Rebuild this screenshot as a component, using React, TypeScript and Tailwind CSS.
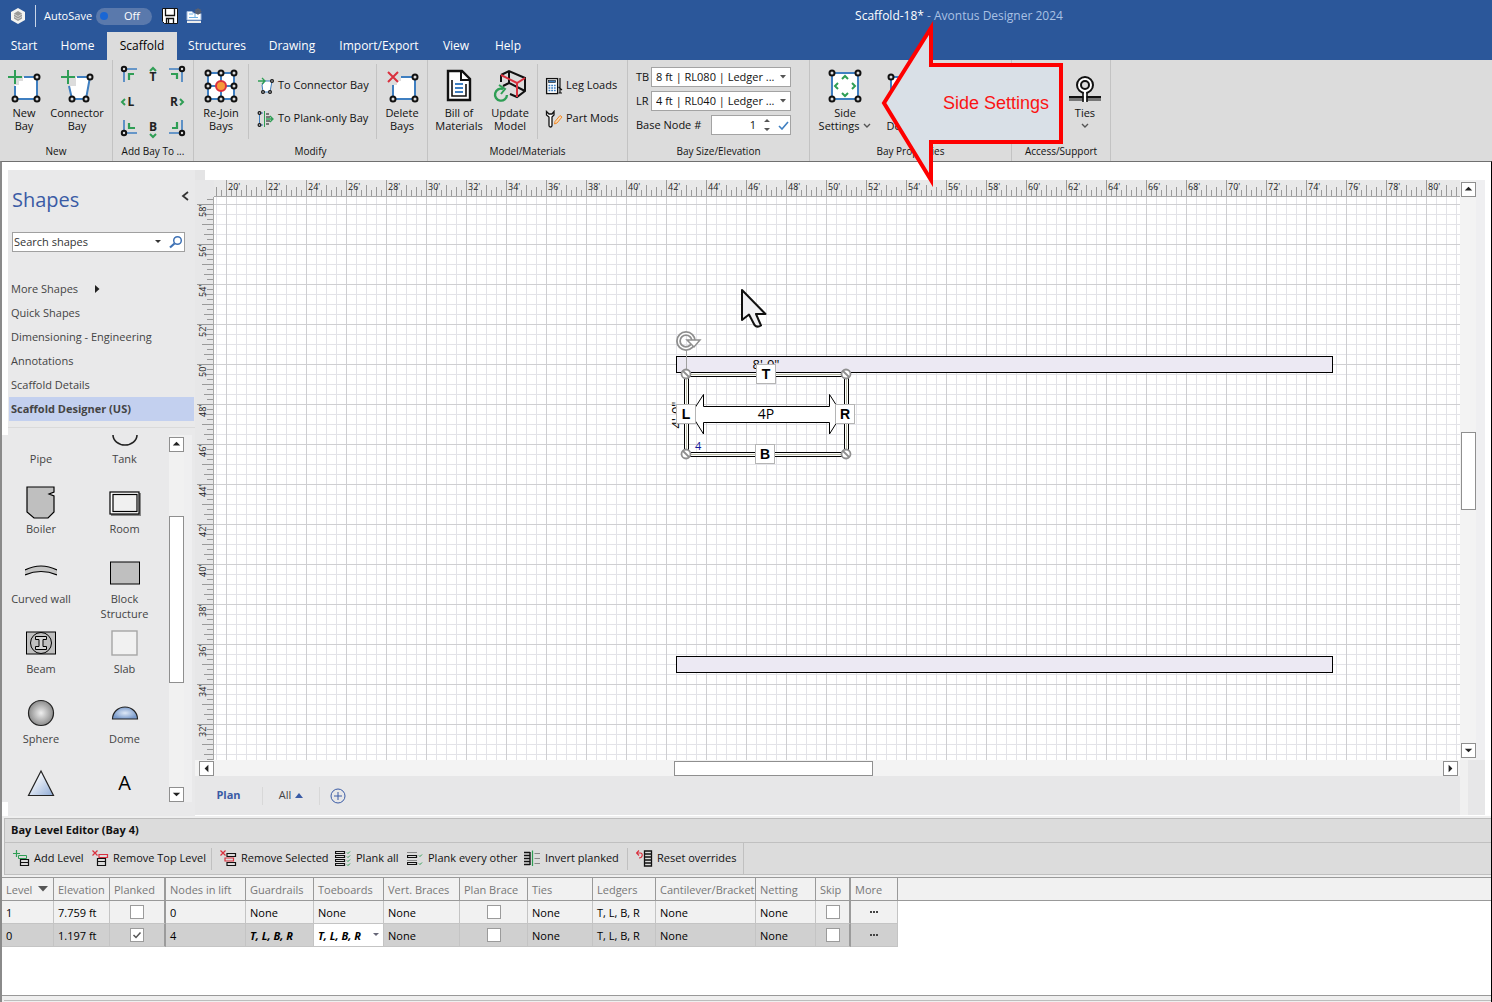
import React, { useState } from 'react';

const TABS = [
  { name: 'Start', width: 'w-12' },
  { name: 'Home', width: 'w-[59px]' },
  { name: 'Scaffold', width: 'w-[70px]' },
  { name: 'Structures', width: 'w-20' },
  { name: 'Drawing', width: 'w-[70px]' },
  { name: 'Import/Export', width: 'w-[104px]' },
  { name: 'View', width: 'w-[50px]' },
  { name: 'Help', width: 'w-[54px]' },
];

const STENCILS = ['Quick Shapes', 'Dimensioning - Engineering', 'Annotations', 'Scaffold Details', 'Scaffold Designer (US)'];

const BLUE = '#3f7fc1';
const GREEN = '#2f9e55';
const RED = '#d9303e';

/* ---------- ribbon icons ---------- */

const Node: React.FC<{ x: number; y: number; r?: number }> = ({ x, y, r = 2.5 }) => (
  <circle cx={x} cy={y} r={r} fill="#dcdcdc" stroke="#111" strokeWidth={r > 2 ? 2 : 1.2} />
);

const NewBayIcon = () => (
  <svg width="34" height="34" viewBox="0 0 34 34" fill="none">
    <path d="M16 8H30V30H8V16H12V12H16Z" fill="#fff" />
    <path d="M17 8H30V30H8V17" stroke={BLUE} strokeWidth="2" />
    <path d="M8 1V15M1 8H15" stroke={GREEN} strokeWidth="2" />
    <Node x={30} y={8} />
    <Node x={8} y={30} />
    <Node x={30} y={30} />
  </svg>
);

const ConnectorBayIcon = () => (
  <svg width="34" height="34" viewBox="0 0 34 34" fill="none">
    <path d="M16 8H30L26 30H12L9 17H16Z" fill="#fff" />
    <path d="M17 8H30L26 30H12L9 17" stroke={BLUE} strokeWidth="2" />
    <path d="M8 1V15M1 8H15" stroke={GREEN} strokeWidth="2" />
    <Node x={30} y={8} />
    <Node x={12} y={30} />
    <Node x={26} y={30} />
  </svg>
);

const DeleteBayIcon = () => (
  <svg width="34" height="34" viewBox="0 0 34 34" fill="none">
    <path d="M16 8H30V30H8V16H12V12H16Z" fill="#fff" />
    <path d="M16 8H30V30H8V16" stroke={BLUE} strokeWidth="2" />
    <path d="M3 3L13 13M13 3L3 13" stroke={RED} strokeWidth="2" />
    <Node x={30} y={8} />
    <Node x={8} y={30} />
    <Node x={30} y={30} />
  </svg>
);

const RejoinIcon = () => (
  <svg width="34" height="34" viewBox="0 0 34 34" fill="none">
    <rect x="4" y="4" width="26" height="26" fill="#fff" stroke={BLUE} strokeWidth="2" />
    <path d="M17 4V30M4 17H30" stroke={BLUE} strokeWidth="2" />
    {[4, 17, 30].map((x) => [4, 17, 30].map((y) => <Node key={`${x}-${y}`} x={x} y={y} />))}
    <circle cx="17" cy="17" r="5" fill="#f79a3a" stroke={RED} strokeWidth="2" />
  </svg>
);

const SideSettingsIcon = () => (
  <svg width="34" height="34" viewBox="0 0 34 34" fill="none">
    <rect x="4" y="4" width="26" height="26" fill="#fff" stroke={BLUE} strokeWidth="2" />
    <path d="M14 10L17 7L20 10M14 24L17 27L20 24M10 14L7 17L10 20M24 14L27 17L24 20" stroke={GREEN} strokeWidth="2" />
    <Node x={4} y={4} />
    <Node x={30} y={4} />
    <Node x={4} y={30} />
    <Node x={30} y={30} />
  </svg>
);

const DetailsIcon = () => (
  <svg width="34" height="34" viewBox="0 0 34 34" fill="none">
    <rect x="4" y="8" width="24" height="22" fill="#fff" stroke={BLUE} strokeWidth="2" />
    <Node x={4} y={8} />
    <Node x={28} y={8} />
    <Node x={28} y={30} />
  </svg>
);

const BillIcon = () => (
  <svg width="34" height="34" viewBox="0 0 34 34" fill="none">
    <path d="M6 2H20L28 10V31H6Z" fill="#fff" stroke="#111" strokeWidth="2.4" />
    <path d="M19 2V11H28" stroke="#111" strokeWidth="2" />
    <path d="M10 11V27H24V15" stroke="#111" strokeWidth="1.6" />
    <path d="M13 15H21M13 19H21M13 23H21" stroke={BLUE} strokeWidth="2" />
  </svg>
);

const UpdateIcon = () => (
  <svg width="34" height="34" viewBox="0 0 34 34" fill="none">
    <path d="M8 6L16 2L32 9V22L24 28L17 25M8 6V13M16 2V14L32 22M16 14L10 17" stroke="#111" strokeWidth="2" />
    <path d="M8 6L24 14L32 9M24 14V28" stroke={RED} strokeWidth="2" />
    <path d="M10 20A6 6 0 1 0 14 26" stroke={GREEN} strokeWidth="2.4" />
    <path d="M6 16L12 20L8 25" stroke={GREEN} strokeWidth="2" />
  </svg>
);

const TiesIcon = () => (
  <svg width="34" height="34" viewBox="0 0 34 34" fill="none">
    <path d="M1 29.5H33" stroke="#777" strokeWidth="5" />
    <path d="M1 28H33" stroke="#111" strokeWidth="2" />
    <circle cx="17" cy="16" r="8" fill="#fff" stroke="#111" strokeWidth="2" />
    <circle cx="17" cy="16" r="4" fill="#dcdcdc" stroke="#111" strokeWidth="2" />
    <path d="M17 22V33" stroke="#fff" strokeWidth="3" />
    <path d="M15 23V33M19 23V33" stroke="#111" strokeWidth="1.6" />
  </svg>
);

const ToConnectorIcon = () => (
  <svg width="18" height="18" viewBox="0 0 18 18" fill="none">
    <path d="M8 4H15L13 15H6L5 8Z" fill="#fff" stroke={BLUE} />
    <path d="M1 4H8M5 1L8 4L5 7" stroke={GREEN} strokeWidth="1.3" />
    <Node x={15} y={4} r={1.4} />
    <Node x={6} y={15} r={1.4} />
    <Node x={13} y={15} r={1.4} />
  </svg>
);

const ToPlankIcon = () => (
  <svg width="18" height="18" viewBox="0 0 18 18" fill="none">
    <path d="M6 3H2.5V15H6" stroke={BLUE} />
    <path d="M7.5 1V17" stroke={GREEN} />
    <path d="M9 4H12M9 7H13M9 11H13M9 14H12" stroke="#111" />
    <path d="M9 9H16M13 6L16 9L13 12" stroke={GREEN} strokeWidth="1.3" />
    <Node x={2.5} y={3} r={1.4} />
    <Node x={2.5} y={15} r={1.4} />
  </svg>
);

const LegLoadsIcon = () => (
  <svg width="18" height="18" viewBox="0 0 18 18" fill="none">
    <rect x="1.6" y="1.6" width="11" height="15" fill="#fff" stroke="#111" strokeWidth="1.3" />
    <rect x="3.5" y="3.5" width="7" height="2" fill={BLUE} stroke="#111" strokeWidth="0.6" />
    <path d="M3.5 8.5H11M3.5 11H11M3.5 13.5H11" stroke={BLUE} strokeWidth="1.6" strokeDasharray="1.8 0.9" />
    <path d="M15 1V16M13.5 16H17M13.5 10L17 13" stroke="#111" strokeWidth="1.2" />
  </svg>
);

const PartModsIcon = () => (
  <svg width="18" height="18" viewBox="0 0 18 18" fill="none">
    <path d="M1.5 1.5V5L4 7V15.5A1 1 0 0 0 7 15.5V7L9 5V1.5L7 4H4Z" fill="#fff" stroke="#111" strokeWidth="1.3" />
    <path d="M9.5 14L10 11.5L15 5.5L17 7L12 13Z" fill="#fbd9b0" stroke="#ee8a2c" />
  </svg>
);

/* One of the four corner variants, turned by 90 degree steps */
const CornerIcon: React.FC<{ turn: number }> = ({ turn }) => (
  <svg width="18" height="18" viewBox="0 0 18 18" fill="none">
    <g transform={`rotate(${turn} 9 9)`}>
      <path d="M4 4V17M4 4H17" stroke={BLUE} strokeWidth="1.6" />
      <path d="M9 15V9H14" stroke={GREEN} strokeWidth="2.2" />
      <Node x={4} y={4} r={2.2} />
    </g>
  </svg>
);

const SideIcon: React.FC<{ letter: string; x: number; y: number; arrow: string }> = ({ letter, x, y, arrow }) => (
  <svg width="20" height="24" viewBox="0 0 20 24" fill="none">
    <text x={x} y={y} textAnchor="middle" className="fill-[#222] font-['Open_Sans',sans-serif] text-[12px] font-bold">
      {letter}
    </text>
    <path d={arrow} stroke={GREEN} strokeWidth="2" />
  </svg>
);

/* ---------- level editor icons ---------- */

const LevelIcon: React.FC<{ kind: string }> = ({ kind }) => (
  <svg width="17" height="17" viewBox="0 0 17 17" fill="none" className="shrink-0">
    {kind === 'add' && (
      <>
        <path d="M3.5 0V7M0 3.5H7" stroke={GREEN} strokeWidth="1.2" />
        <path d="M5.5 5.5H13.5V8.5H5.5Z" stroke={GREEN} />
        <path d="M7.5 9.5H15.5V12.5H7.5ZM7.5 12.5H15.5V15.5H7.5Z" stroke="#111" strokeWidth="1.2" />
      </>
    )}
    {kind === 'remove' && (
      <>
        <path d="M0.5 0.5L5.5 5.5M5.5 0.5L0.5 5.5" stroke={RED} strokeWidth="1.2" />
        <path d="M7 4.5H15.5V7.5H7Z" stroke={RED} strokeWidth="1.2" />
        <path d="M5.5 8.5H13.5V11.5H5.5ZM5.5 11.5H13.5V15.5H5.5Z" stroke="#111" strokeWidth="1.2" />
      </>
    )}
    {kind === 'removeSelected' && (
      <>
        <path d="M0.5 0.5L5.5 5.5M5.5 0.5L0.5 5.5" stroke={RED} strokeWidth="1.2" />
        <path d="M7 3.5H15.5V6.5H7ZM7 12.5H15.5V15.5H7Z" stroke="#111" strokeWidth="1.2" />
        <path d="M5 8H13.5V11H5Z" stroke={RED} strokeWidth="1.2" />
      </>
    )}
    {kind === 'all' && (
      <>
        <path d="M0.5 1.5H9.5V3.5H0.5ZM0.5 5.5H9.5V7.5H0.5ZM0.5 9.5H9.5V11.5H0.5ZM0.5 13.5H9.5V15.5H0.5Z" stroke="#111" strokeWidth="1.2" />
        <path d="M12 2.5L13 3.5L15 1.5M12 6.5L13 7.5L15 5.5M12 10.5L13 11.5L15 9.5M12 14.5L13 15.5L15 13.5" stroke={GREEN} />
      </>
    )}
    {kind === 'other' && (
      <>
        <path d="M0 2.5H10M0 10.5H10" stroke="#888" />
        <path d="M0.5 5.5H9.5V7.5H0.5ZM0.5 12.5H9.5V14.5H0.5Z" stroke="#111" strokeWidth="1.2" />
        <path d="M12 5.5L13 6.5L15 4.5M12 13.5L13 14.5L15 12.5" stroke={GREEN} />
      </>
    )}
    {kind === 'invert' && (
      <>
        <path d="M0 2.5H6M0 5.5H6M0 8.5H6M0 11.5H6M0 14.5H6M6 2V15" stroke="#111" strokeWidth="1.4" />
        <path d="M8.5 0.5V16" stroke={GREEN} strokeWidth="1.2" />
        <path d="M10.5 3.5H16M10.5 8.5H16M10.5 13.5H16" stroke="#888" />
      </>
    )}
    {kind === 'reset' && (
      <>
        <path d="M8.5 1H15.5V16H8.5ZM8.5 4H15.5M8.5 7H15.5M8.5 10H15.5M8.5 13H15.5" stroke="#111" strokeWidth="1.3" />
        <path d="M0.5 3H4.5C7 3 7 8 3 8M3 0.5L0.5 3L3 5.5" stroke={RED} strokeWidth="1.2" />
      </>
    )}
  </svg>
);

/* ---------- shared bits ---------- */

const RibbonButton: React.FC<{ icon: React.ReactNode; lines: string[]; width: string; menu?: boolean }> = ({ icon, lines, width, menu }) => (
  <button type="button" className={`flex shrink-0 flex-col items-center pt-[9px] text-[11px] leading-[13px] whitespace-nowrap ${width}`}>
    {icon}
    <span className="mt-[3px]">{lines[0]}</span>
    <span className="flex min-h-[13px] items-center gap-1">
      {lines[1]}
      {menu && (
        <svg width="8" height="6" viewBox="0 0 8 6" fill="none">
          <path d="M1 1L4 4L7 1" stroke="#555" strokeWidth="1.4" />
        </svg>
      )}
    </span>
  </button>
);

const RibbonGroup: React.FC<{ label: string; width: string; children: React.ReactNode }> = ({ label, width, children }) => (
  <section className={`flex shrink-0 flex-col border-r border-[#c3c3c3] ${width}`}>
    <div className="flex flex-1">{children}</div>
    <div className="pb-[3px] text-center text-[10px] leading-[13px] whitespace-nowrap">{label}</div>
  </section>
);

const RibbonDivider = () => <div className="mt-1 h-[75px] w-px shrink-0 bg-[#c3c3c3]" />;

const SmallButton: React.FC<{ icon: React.ReactNode; label: string }> = ({ icon, label }) => (
  <button type="button" className="flex h-[33px] items-center gap-[3px] text-[11px] whitespace-nowrap">
    {icon}
    {label}
  </button>
);

const ARROWS: Record<string, string> = {
  up: 'M3 8L7 4L11 8Z',
  down: 'M3 5L7 9L11 5Z',
  left: 'M9 3V11L5 7Z',
  right: 'M5 3V11L9 7Z',
};

const ScrollButton: React.FC<{ dir: string }> = ({ dir }) => (
  <button type="button" aria-label={`Scroll ${dir}`} className="flex h-[15px] w-[15px] shrink-0 items-center justify-center border border-[#8f8f8f] bg-white">
    <svg width="13" height="13" viewBox="0 0 14 14">
      <path d={ARROWS[dir]} fill="#222" />
    </svg>
  </button>
);

/* ---------- header ---------- */

const Header: React.FC<{ tab: string; onTab: (t: string) => void }> = ({ tab, onTab }) => (
  <header className="shrink-0 bg-[#2b579a] text-white">
    <div className="flex h-8 items-center">
      <div className="flex w-[426px] shrink-0 items-center pl-[10px]">
        <svg width="16" height="16" viewBox="0 0 16 16" className="shrink-0">
          <path d="M8 0L15 4V12L8 16L1 12V4Z" fill="#f3f3f0" />
          <path d="M8 3L12 5.5V10.5L8 13L4 10.5V5.5Z" fill="#9a9a98" />
          <path d="M4 6L8 8.5L12 6M4 8.5L8 11L12 8.5" stroke="#e8e8e8" strokeWidth="0.7" fill="none" />
        </svg>
        <div className="ml-[9px] h-[22px] w-px bg-[#c9d5e8]" />
        <label htmlFor="autosave" className="ml-2 w-[52px] text-[11px] whitespace-nowrap">
          AutoSave
        </label>
        <button id="autosave" type="button" role="switch" aria-checked="false" className="flex h-[17px] w-14 items-center rounded-full bg-[#5a79ac] pl-1 text-[11px]">
          <span className="h-2 w-2 rounded-full bg-[#1a66d4]" />
          <span className="ml-4">Off</span>
        </button>
        <button type="button" aria-label="Save" className="ml-[10px]">
          <svg width="16" height="16" viewBox="0 0 16 16" fill="none">
            <path d="M0.5 0.5H15.5V15.5H2.5L0.5 13.5Z" fill="#fff" stroke="#111" />
            <path d="M3.5 1V7.5H12.5V1M4.5 15V10.5H11.5V15M6.5 11V15" stroke="#111" strokeWidth="1.3" />
          </svg>
        </button>
        <button type="button" aria-label="Page setup" className="ml-2">
          <svg width="16" height="16" viewBox="0 0 16 16" fill="none">
            <path d="M1 3.5H6L8 5.5H15V12H1Z" fill="#fff" stroke="#9fb8dc" />
            <path d="M3 6H7M3 9.5H12M9 6V9" stroke="#6fb0e4" />
            <path d="M1 14H15" stroke="#ececec" strokeWidth="2" />
            <circle cx="12" cy="3.5" r="2" stroke="#5a6170" strokeWidth="1.6" />
            <path d="M12 0V7M8.5 3.5H15.5M9.5 1L14.5 6M14.5 1L9.5 6" stroke="#5a6170" strokeWidth="0.8" />
          </svg>
        </button>
      </div>
      <h1 className="flex-1 text-center text-[12px]">
        Scaffold-18* <span className="text-[#a9c1e4]">- Avontus Designer 2024</span>
      </h1>
    </div>
    <nav className="flex h-7 text-[12px]">
      {TABS.map((t) => (
        <button
          key={t.name}
          type="button"
          onClick={() => onTab(t.name)}
          className={`shrink-0 font-medium whitespace-nowrap ${t.width} ${t.name === tab ? 'bg-[#dcdcdc] text-black' : ''}`}
        >
          {t.name}
        </button>
      ))}
    </nav>
  </header>
);

const LedgerSelect: React.FC<{ id: string; label: string; value: string }> = ({ id, label, value }) => (
  <div className="flex h-5 items-center">
    <label htmlFor={id} className="w-[15px]">
      {label}
    </label>
    <div className="relative">
      <select id={id} className="block h-5 w-[140px] appearance-none border border-[#a3a3a3] bg-white pl-1 text-[11px]">
        <option>{value}</option>
      </select>
      <svg width="8" height="4" viewBox="0 0 8 4" className="pointer-events-none absolute top-2 right-1">
        <path d="M1 0H7L4 3.5Z" fill="#555" />
      </svg>
    </div>
  </div>
);

const Ribbon = () => (
  <div className="flex h-[101px] shrink-0 bg-[#dcdcdc] text-[#111]">
    <RibbonGroup label="New" width="w-[113px]">
      <RibbonButton icon={<NewBayIcon />} lines={['New', 'Bay']} width="w-12" />
      <RibbonButton icon={<ConnectorBayIcon />} lines={['Connector', 'Bay']} width="w-[58px]" />
    </RibbonGroup>
    <RibbonGroup label="Add Bay To ..." width="w-[81px]">
      <div className="grid flex-1 grid-cols-3 place-items-center px-1 pb-1">
        <button type="button" aria-label="Top left"><CornerIcon turn={0} /></button>
        <button type="button" aria-label="Top"><SideIcon letter="T" x={10} y={19} arrow="M7 9L10 6L13 9" /></button>
        <button type="button" aria-label="Top right"><CornerIcon turn={90} /></button>
        <button type="button" aria-label="Left"><SideIcon letter="L" x={12} y={17} arrow="M6 10L3 13L6 16" /></button>
        <span />
        <button type="button" aria-label="Right"><SideIcon letter="R" x={7} y={17} arrow="M13 10L16 13L13 16" /></button>
        <button type="button" aria-label="Bottom left"><CornerIcon turn={270} /></button>
        <button type="button" aria-label="Bottom"><SideIcon letter="B" x={10} y={15} arrow="M7 18L10 21L13 18" /></button>
        <button type="button" aria-label="Bottom right"><CornerIcon turn={180} /></button>
      </div>
    </RibbonGroup>
    <RibbonGroup label="Modify" width="w-[234px]">
      <RibbonButton icon={<RejoinIcon />} lines={['Re-Join', 'Bays']} width="w-[54px]" />
      <RibbonDivider />
      <div className="flex w-[127px] flex-col pt-[9px] pl-2">
        <SmallButton icon={<ToConnectorIcon />} label="To Connector Bay" />
        <SmallButton icon={<ToPlankIcon />} label="To Plank-only Bay" />
      </div>
      <RibbonDivider />
      <RibbonButton icon={<DeleteBayIcon />} lines={['Delete', 'Bays']} width="w-[50px]" />
    </RibbonGroup>
    <RibbonGroup label="Model/Materials" width="w-[200px]">
      <RibbonButton icon={<BillIcon />} lines={['Bill of', 'Materials']} width="w-[62px]" />
      <RibbonButton icon={<UpdateIcon />} lines={['Update', 'Model']} width="w-10" />
      <div className="w-[7px]" />
      <RibbonDivider />
      <div className="flex flex-col pt-[9px] pl-[7px]">
        <SmallButton icon={<LegLoadsIcon />} label="Leg Loads" />
        <SmallButton icon={<PartModsIcon />} label="Part Mods" />
      </div>
    </RibbonGroup>
    <RibbonGroup label="Bay Size/Elevation" width="w-[182px]">
      <div className="flex w-[163px] flex-col gap-1 pt-[7px] pl-2 text-[11px]">
        <LedgerSelect id="ledger-tb" label="TB" value="8 ft | RL080 | Ledger ..." />
        <LedgerSelect id="ledger-lr" label="LR" value="4 ft | RL040 | Ledger ..." />
        <div className="flex h-5 items-center justify-between">
          <label htmlFor="base-node" className="whitespace-nowrap">Base Node #</label>
          <div className="flex h-5 w-20 items-center gap-2 border border-[#a3a3a3] bg-white pr-[2px]">
            <input id="base-node" defaultValue="1" className="w-11 text-right outline-none" />
            <svg width="6" height="12" viewBox="0 0 6 12" className="shrink-0">
              <path d="M0 3H6L3 0ZM0 9H6L3 12Z" fill="#555" />
            </svg>
            <svg width="11" height="9" viewBox="0 0 11 9" fill="none" className="shrink-0">
              <path d="M1 5L4 8L10 1" stroke={BLUE} strokeWidth="1.6" />
            </svg>
          </div>
        </div>
      </div>
    </RibbonGroup>
    <RibbonGroup label="Bay Properties" width="w-[202px]">
      <RibbonButton icon={<SideSettingsIcon />} lines={['Side', 'Settings']} width="w-[70px]" menu />
      <RibbonButton icon={<DetailsIcon />} lines={['Bay', 'Details']} width="w-12" />
    </RibbonGroup>
    <RibbonGroup label="Access/Support" width="w-[99px]">
      <div className="w-12" />
      <RibbonButton icon={<TiesIcon />} lines={['Ties']} width="w-[50px]" menu />
    </RibbonGroup>
  </div>
);

/* ---------- shapes panel ---------- */

const SHAPES = [
  {
    name: 'Boiler',
    icon: (
      <svg width="30" height="34" viewBox="0 0 30 34">
        <path d="M1 1H28V6L23 8L28 10V26L22 32H8L1 26Z" fill="#bfbfbf" stroke="#000" strokeWidth="1.2" />
      </svg>
    ),
  },
  {
    name: 'Room',
    icon: (
      <svg width="32" height="26" viewBox="0 0 32 26" fill="none">
        <path d="M2 25H31V3" stroke="#888" strokeWidth="2" />
        <rect x="1" y="2" width="29" height="22" fill="#fff" stroke="#000" strokeWidth="1.2" />
        <rect x="4" y="4.5" width="24" height="17" fill="#f0f0f0" stroke="#000" strokeWidth="1.2" />
      </svg>
    ),
  },
  {
    name: 'Curved wall',
    icon: (
      <svg width="32" height="16" viewBox="0 0 32 16">
        <path d="M0 5Q16 -3 32 5V10Q16 3 0 10Z" fill="#c4c4c4" />
        <path d="M0 5Q16 -3 32 5M0 10Q16 3 32 10" fill="none" stroke="#000" strokeWidth="1.2" />
      </svg>
    ),
  },
  {
    name: 'Block Structure',
    icon: (
      <svg width="30" height="24" viewBox="0 0 30 24">
        <rect x="0.5" y="1" width="29" height="22" fill="#bfbfbf" stroke="#000" />
      </svg>
    ),
  },
  {
    name: 'Beam',
    icon: (
      <svg width="30" height="24" viewBox="0 0 30 24">
        <rect x="0.5" y="1" width="29" height="22" fill="#bfbfbf" stroke="#000" />
        <circle cx="15" cy="12" r="10.5" fill="none" stroke="#000" />
        <path d="M9.5 5.5H20.5V8.5H17V15.5H20.5V18.5H9.5V15.5H13V8.5H9.5Z" fill="#d6d6d6" stroke="#000" />
      </svg>
    ),
  },
  {
    name: 'Slab',
    icon: (
      <svg width="27" height="26" viewBox="0 0 27 26">
        <rect x="1" y="1" width="25" height="24" fill="#f1f1f1" stroke="#a5a5a5" strokeWidth="1.4" />
      </svg>
    ),
  },
  {
    name: 'Sphere',
    icon: (
      <svg width="28" height="28" viewBox="0 0 28 28">
        <defs>
          <radialGradient id="sphere">
            <stop offset="0" stopColor="#efefef" />
            <stop offset="1" stopColor="#8c8c8c" />
          </radialGradient>
        </defs>
        <circle cx="14" cy="14" r="12.5" fill="url(#sphere)" stroke="#222" strokeWidth="1.2" />
      </svg>
    ),
  },
  {
    name: 'Dome',
    icon: (
      <svg width="28" height="14" viewBox="0 0 28 14">
        <defs>
          <radialGradient id="dome">
            <stop offset="0" stopColor="#dfe9f7" />
            <stop offset="1" stopColor="#7a9bcc" />
          </radialGradient>
        </defs>
        <path d="M1.5 13A12.5 12 0 0 1 26.5 13Z" fill="url(#dome)" stroke="#222" strokeWidth="1.2" />
      </svg>
    ),
  },
  {
    name: '',
    icon: (
      <svg width="28" height="28" viewBox="0 0 28 28">
        <defs>
          <linearGradient id="cone" x1="0" y1="0" x2="1" y2="1">
            <stop offset="0.3" stopColor="#f2f5fa" />
            <stop offset="1" stopColor="#8fabd6" />
          </linearGradient>
        </defs>
        <path d="M14 2L26.5 26.5H1.5Z" fill="url(#cone)" stroke="#222" strokeWidth="1.2" />
      </svg>
    ),
  },
  { name: '', icon: <span className="text-[20px] leading-none font-medium text-black">A</span> },
];

const ShapesPanel = () => (
  <aside className="flex w-[193px] shrink-0 flex-col pt-2 text-[#444]">
    <div className="ml-[6px] bg-[#e9e9ea] pb-[7px]">
      <div className="flex h-[62px] items-start justify-between pt-4 pr-[6px] pl-1">
        <h2 className="text-[20px] leading-7 text-[#3a5ba5]">Shapes</h2>
        <button type="button" aria-label="Collapse" className="mt-1">
          <svg width="8" height="12" viewBox="0 0 8 12" fill="none">
            <path d="M7 2L2 6L7 10" stroke="#333" strokeWidth="1.8" />
          </svg>
        </button>
      </div>
      <div className="ml-1 flex h-5 w-[173px] items-center border border-[#a0a0a0] bg-white">
        <input aria-label="Search shapes" placeholder="Search shapes" className="w-[142px] pl-px text-[11px] outline-none placeholder:text-[#333]" />
        <svg width="6" height="4" viewBox="0 0 6 4" className="shrink-0">
          <path d="M0 0H6L3 3Z" fill="#333" />
        </svg>
        <button type="button" aria-label="Search" className="ml-2">
          <svg width="14" height="14" viewBox="0 0 14 14" fill="none">
            <circle cx="8.5" cy="5.5" r="3.8" stroke="#3f72b5" strokeWidth="1.5" />
            <path d="M5.5 8.5L1 12.5" stroke="#3f72b5" strokeWidth="2.2" />
          </svg>
        </button>
      </div>
      <ul className="mt-[25px] text-[11px] leading-6">
        <li className="flex items-center pl-[3px]">
          <a href="#more" className="w-[84px]">More Shapes</a>
          <svg width="5" height="8" viewBox="0 0 5 8">
            <path d="M0 0V8L4.5 4Z" fill="#222" />
          </svg>
        </li>
        {STENCILS.map((s, i) => (
          <li key={s} className={`mr-px ml-px pl-[2px] whitespace-nowrap ${i === 4 ? 'bg-[#c3d0ef] font-bold' : ''}`}>
            <a href="#stencil">{s}</a>
          </li>
        ))}
      </ul>
      <div className="mt-[6px] h-px bg-[#dadada]" />
    </div>
    <div className="flex min-h-0 flex-1 bg-[#e9e9ea]">
      <div className="grid w-[167px] grid-cols-[78px_89px] content-start overflow-hidden text-center text-[11px] leading-[15px]">
        <div className="h-[29px] pt-4">Pipe</div>
        <div className="flex h-[29px] flex-col items-center">
          <svg width="26" height="12" viewBox="0 0 26 12" fill="none" className="mb-1 shrink-0">
            <path d="M1 0A12 10 0 0 0 25 0" stroke="#222" strokeWidth="1.6" />
          </svg>
          Tank
        </div>
        {SHAPES.map((s, i) => (
          <div key={i} className="flex h-[70px] flex-col items-center pt-[21px]">
            <div className="flex h-9 shrink-0 items-center">{s.icon}</div>
            <span className="w-[70px]">{s.name}</span>
          </div>
        ))}
      </div>
      <div className="flex w-[15px] flex-col bg-[#f1f1f1] pt-[2px]">
        <ScrollButton dir="up" />
        <div className="mt-16 h-[167px] border border-[#8f8f8f] bg-white" />
        <div className="flex-1" />
        <ScrollButton dir="down" />
      </div>
      <div className="w-2 bg-[#efeff0]" />
    </div>
    <div className="ml-[6px] h-[14px] shrink-0 bg-[#e9e9ea]" />
  </aside>
);

/* ---------- drawing canvas ---------- */

const range = (n: number) => Array.from({ length: n }, (_, i) => i);

/* tick length depends on which fraction of two feet it marks */
const tickStart = (i: number) => {
  if (i % 8 === 0) return 0;
  if (i % 4 === 0) return 5;
  return i % 2 === 0 ? 7 : 10;
};

const TopRuler = () => (
  <svg className="block h-[17px] min-w-0 flex-1 bg-[#e9e9e9]" aria-hidden="true">
    {range(400).map((i) => (
      <rect key={i} x={2 + i * 5} y={tickStart(i + 6)} width="1" height={16 - tickStart(i + 6)} fill="#9a9a9a" />
    ))}
    {range(31).map((i) => (
      <text key={i} x={14 + i * 40} y="10" className="fill-[#222] text-[9px]">
        {20 + i * 2}'
      </text>
    ))}
    <rect y="16" width="100%" height="1" fill="#a8a8a8" />
  </svg>
);

const SideRuler = () => (
  <svg className="block h-full w-[19px] shrink-0" aria-hidden="true">
    {range(160).map((i) => (
      <rect key={i} x={2 + tickStart(i + 7)} y={2 + i * 5} width={16 - tickStart(i + 7)} height="1" fill="#9a9a9a" />
    ))}
    {range(14).map((i) => (
      <text key={i} transform={`translate(11 ${20 + i * 40}) rotate(-90)`} className="fill-[#222] text-[9px]">
        {58 - i * 2}'
      </text>
    ))}
    <rect x="18" width="1" height="100%" fill="#a8a8a8" />
  </svg>
);

const Badge: React.FC<{ x: number; y: number; letter: string }> = ({ x, y, letter }) => (
  <g>
    <rect x={x + 0.5} y={y + 0.5} width="19" height="19" fill="#fff" stroke="#b5b5b5" />
    <text x={x + 10} y={y + 15} textAnchor="middle" className="font-['Liberation_Sans',sans-serif] text-[14px] font-bold">
      {letter}
    </text>
  </g>
);

const Drawing = () => (
  <svg className="block h-full min-w-0 flex-1 bg-white" role="img" aria-label="Plan">
    <defs>
      <pattern id="grid" x="226" y="204" width="40" height="40" patternUnits="userSpaceOnUse">
        <path d="M10.5 0V40M20.5 0V40M30.5 0V40M0 10.5H40M0 20.5H40M0 30.5H40" stroke="#e3e3e8" />
        <path d="M0.5 0V40M0 0.5H40" stroke="#cfcfd2" />
      </pattern>
    </defs>
    {/* page coordinates start at the window corner */}
    <g transform="translate(-214 -197)">
      <rect x="214" y="197" width="3000" height="2000" fill="url(#grid)" />
      <rect x="676.5" y="356.5" width="656" height="16" fill="#ece9f3" stroke="#000" />
      <rect x="676.5" y="656.5" width="656" height="16" fill="#ece9f3" stroke="#000" />

      <text x="766" y="369" textAnchor="middle" className="text-[13px]">8'-0"</text>
      <text transform="translate(681 415) rotate(-90)" textAnchor="middle" className="text-[13px]">4'-0"</text>
      <rect x="686.5" y="374.5" width="160" height="80" fill="none" stroke="#fff" strokeWidth="3" />
      <rect x="686.5" y="374.5" width="160" height="80" fill="none" stroke="#b9bca6" />
      <rect x="684.5" y="372.5" width="164" height="84" fill="none" stroke="#000" />
      <rect x="688.5" y="376.5" width="156" height="76" fill="none" stroke="#000" />
      <path d="M691 414L703.5 394.5V406.5H829.5V394.5L842 414L829.5 434V422.5H703.5V434Z" fill="#fff" stroke="#000" />
      <text x="766" y="419" textAnchor="middle" className="text-[14px]">4P</text>
      <text x="695" y="450" className="fill-[#10189c] text-[11px]">4</text>

      <path d="M686.5 350V369" stroke="#a0a0a0" />
      <circle cx="686" cy="341" r="7.5" fill="none" stroke="#8f8f8f" strokeWidth="5" />
      <circle cx="686" cy="341" r="7.5" fill="none" stroke="#fff" strokeWidth="1.4" />
      <path d="M687 340H700L694 347Z" fill="#fff" stroke="#8f8f8f" strokeWidth="1.5" />
      {[[686, 374], [846, 374], [686, 454], [846, 454]].map(([x, y]) => (
        <g key={`${x}-${y}`}>
          <circle cx={x} cy={y} r="4.5" fill="#fff" stroke="#8f8f8f" strokeWidth="1.8" />
          <path d={`M${x - 3} ${y - 3}L${x + 3} ${y + 3}`} stroke="#8f8f8f" strokeWidth="1.8" />
        </g>
      ))}
      <Badge x={756} y={364} letter="T" />
      <Badge x={676} y={404} letter="L" />
      <Badge x={835} y={404} letter="R" />
      <Badge x={755} y={444} letter="B" />

      {/* pointer */}
      <path d="M742 290V320L749 314.5L754.5 325Q757 328 761 325.5L756 314H765.5Z" fill="#f1f1f4" stroke="#111" strokeWidth="2" strokeLinejoin="round" />
    </g>
  </svg>
);

const Workspace = () => (
  <main className="flex min-h-0 flex-1 bg-white pr-[6px]">
    <ShapesPanel />
    <div className="flex min-w-0 flex-1 flex-col">
      <div className="h-[18px] shrink-0 pt-2">
        <div className="h-[10px] w-[10px] bg-[#e4e4e5]" />
      </div>
      <div className="flex min-h-0 flex-1">
        <div className="flex min-w-0 flex-1 flex-col bg-[#e7e7e8]">
          <div className="flex shrink-0">
            <div className="w-[19px] shrink-0" />
            <TopRuler />
          </div>
          <div className="flex min-h-0 flex-1">
            <SideRuler />
            <Drawing />
          </div>
          <div className="flex h-4 shrink-0 bg-[#f3f3f3] pt-px pr-[2px] pl-1">
            <ScrollButton dir="left" />
            <div className="grow-[460]" />
            <div className="w-[199px] border border-[#8f8f8f] bg-white" />
            <div className="grow-[571]" />
            <ScrollButton dir="right" />
          </div>
          <div className="flex h-[39px] shrink-0 items-center text-[11px]">
            <button type="button" className="w-[67px] text-center font-bold text-[#3a5ba5]">Plan</button>
            <div className="h-[18px] w-px bg-[#d8d8d8]" />
            <button type="button" className="flex w-14 items-center justify-center gap-1 text-[#444]">
              All
              <svg width="8" height="5" viewBox="0 0 8 5">
                <path d="M0 5H8L4 0Z" fill="#3a5ba5" />
              </svg>
            </button>
            <div className="h-[18px] w-px bg-[#d8d8d8]" />
            <button type="button" aria-label="Insert page" className="ml-[10px]">
              <svg width="16" height="16" viewBox="0 0 16 16" fill="none">
                <circle cx="8" cy="8" r="7" stroke="#3a5ba5" />
                <path d="M8 4V12M4 8H12" stroke="#3a5ba5" />
              </svg>
            </button>
          </div>
        </div>
        <div className="flex w-[25px] shrink-0 flex-col bg-[#e7e7e8]">
          <div className="flex min-h-0 flex-1 bg-[#efeff1]">
            <div className="flex flex-col bg-[#f3f3f3] py-[2px] pl-px">
              <ScrollButton dir="up" />
              <div className="grow-[235]" />
              <div className="h-[78px] border border-[#8f8f8f] bg-white" />
              <div className="grow-[233]" />
              <ScrollButton dir="down" />
            </div>
          </div>
          <div className="h-[55px] w-2 bg-[#f0f0f0]" />
        </div>
      </div>
      <div className="h-px shrink-0" />
    </div>
  </main>
);

/* ---------- level editor ---------- */

const TOOLS = [
  { label: 'Add Level', icon: 'add', width: 'w-[79px]' },
  { label: 'Remove Top Level', icon: 'remove', width: 'w-[119px]' },
  { label: 'Remove Selected', icon: 'removeSelected', width: 'w-[115px]' },
  { label: 'Plank all', icon: 'all', width: 'w-[72px]' },
  { label: 'Plank every other', icon: 'other', width: 'w-[117px]' },
  { label: 'Invert planked', icon: 'invert', width: 'w-[103px]' },
  { label: 'Reset overrides', icon: 'reset', width: 'w-[107px]' },
];

const COLUMNS = [
  { name: 'Level', width: 'w-[52px]' },
  { name: 'Elevation', width: 'w-14' },
  { name: 'Planked', width: 'w-14' },
  { name: 'Nodes in lift', width: 'w-20' },
  { name: 'Guardrails', width: 'w-[68px]' },
  { name: 'Toeboards', width: 'w-[70px]' },
  { name: 'Vert. Braces', width: 'w-[76px]' },
  { name: 'Plan Brace', width: 'w-[68px]' },
  { name: 'Ties', width: 'w-[65px]' },
  { name: 'Ledgers', width: 'w-[63px]' },
  { name: 'Cantilever/Bracket', width: 'w-[100px]' },
  { name: 'Netting', width: 'w-[60px]' },
  { name: 'Skip', width: 'w-[35px]' },
  { name: 'More', width: 'w-[47px]' },
];

const ROWS = [
  { selected: false, cells: ['1', '7.759 ft', false, '0', 'None', 'None', 'None', false, 'None', 'T, L, B, R', 'None', 'None', false, '...'] },
  { selected: true, cells: ['0', '1.197 ft', true, '4', 'T, L, B, R', 'T, L, B, R', 'None', false, 'None', 'T, L, B, R', 'None', 'None', false, '...'] },
];

const edge = (name: string) => (name === 'Planked' || name === 'Skip' ? 'border-r-2 border-r-[#9b9b9b]' : 'border-r');

const Check: React.FC<{ checked: boolean; label: string }> = ({ checked, label }) => (
  <span className="relative mx-auto block h-[14px] w-[14px]">
    <input type="checkbox" aria-label={label} defaultChecked={checked} className="peer block h-[14px] w-[14px] appearance-none border border-[#9b9b9b] bg-white" />
    <svg width="14" height="14" viewBox="0 0 14 14" fill="none" className="pointer-events-none absolute inset-0 hidden peer-checked:block">
      <path d="M3.5 7L6 9.5L10.5 4.5" stroke="#555" strokeWidth="1.5" />
    </svg>
  </span>
);

const LevelEditor = () => (
  <section className="shrink-0 bg-[#efefef] pt-[2px]">
    <div className="ml-[2px] border-t border-l border-[#bdbdbd] bg-[#dcdcdc]">
      <h2 className="flex h-6 items-center border-b border-[#c0c0c0] pl-[6px] text-[11px] font-bold text-[#111]">Bay Level Editor (Bay 4)</h2>
      <div className="flex h-8 items-center border-b border-[#c0c0c0] pl-2 text-[11px] text-[#111]">
        {TOOLS.map((t) => (
          <React.Fragment key={t.label}>
            {(t.icon === 'removeSelected' || t.icon === 'reset') && <div className="mr-2 h-[22px] w-px bg-[#c0c0c0]" />}
            <button type="button" className={`flex shrink-0 items-center gap-1 whitespace-nowrap ${t.width}`}>
              <LevelIcon kind={t.icon} />
              {t.label}
            </button>
          </React.Fragment>
        ))}
        <div className="h-full w-px bg-[#c0c0c0]" />
      </div>
    </div>
    <div className="mt-[2px] h-[119px] border-y border-[#999] bg-white">
      <table className="w-full table-fixed border-separate border-spacing-0 text-left text-[11px] leading-[15px]">
        <thead>
          <tr className="h-[23px] bg-[#f1f1f1]">
            {COLUMNS.map((c) => (
              <th key={c.name} className={`border-b border-[#999] px-1 py-0 font-normal whitespace-nowrap text-[#777] ${c.width} ${edge(c.name)}`}>
                {c.name === 'Level' ? (
                  <span className="flex items-center gap-[6px]">
                    Level
                    <svg width="10" height="6" viewBox="0 0 10 6">
                      <path d="M0 0H10L5 5.5Z" fill="#555" />
                    </svg>
                  </span>
                ) : (
                  c.name
                )}
              </th>
            ))}
            <th className="border-b border-[#999]" />
          </tr>
        </thead>
        <tbody>
          {ROWS.map((row) => (
            <tr key={String(row.cells[0])} className="h-[23px]">
              {row.cells.map((cell, i) => {
                const name = COLUMNS[i].name;
                const editing = row.selected && name === 'Toeboards';
                const override = row.selected && (name === 'Guardrails' || name === 'Toeboards');
                return (
                  <td
                    key={name}
                    className={`border-b border-[#c4c4c4] px-1 py-0 whitespace-nowrap text-black ${edge(name)} ${
                      editing ? 'bg-white' : row.selected ? 'bg-[#d0d0d0]' : 'bg-[#f1f1f1]'
                    } ${override ? 'font-bold italic' : ''}`}
                  >
                    {typeof cell === 'boolean' ? (
                      <Check checked={cell} label={`${name}, level ${row.cells[0]}`} />
                    ) : cell === '...' ? (
                      <button type="button" aria-label="More" className="mx-auto flex gap-px">
                        <span className="h-[2px] w-[2px] bg-[#444]" />
                        <span className="h-[2px] w-[2px] bg-[#444]" />
                        <span className="h-[2px] w-[2px] bg-[#444]" />
                      </button>
                    ) : editing ? (
                      <button type="button" className="flex w-full items-center justify-between">
                        {cell}
                        <svg width="6" height="4" viewBox="0 0 6 4">
                          <path d="M0 0H6L3 3Z" fill="#667" />
                        </svg>
                      </button>
                    ) : (
                      cell
                    )}
                  </td>
                );
              })}
              <td />
            </tr>
          ))}
        </tbody>
      </table>
    </div>
    <div className="mt-1 ml-[2px] h-[2px] border-t border-[#bdbdbd]" />
  </section>
);

/* Callout that points at the Side Settings button */
const Callout = () => (
  <svg width="184" height="168" viewBox="0 0 184 168" className="pointer-events-none absolute top-[19px] left-[880px]">
    <path d="M4 84L51 9V46H181V123H51V161Z" fill="#d9e0e7" stroke="#fe0000" strokeWidth="4" strokeMiterlimit="10" />
    <text x="116" y="90" textAnchor="middle" className="fill-[#fb1414] font-['Liberation_Sans',Arial,sans-serif] text-[18px]">
      Side Settings
    </text>
  </svg>
);

const App: React.FC = () => {
  const [tab, setTab] = useState('Scaffold');

  return (
    <div className="relative flex h-screen flex-col overflow-hidden bg-[#dcdcdc] font-['Open_Sans','Noto_Sans',sans-serif]">
      <Header tab={tab} onTab={setTab} />
      <Ribbon />
      <div className="flex min-h-0 flex-1 flex-col border-t border-r border-l-2 border-t-[#707070] border-r-black border-l-[#8a8a8a]">
        <Workspace />
        <LevelEditor />
      </div>
      <Callout />
    </div>
  );
};

export default App;
